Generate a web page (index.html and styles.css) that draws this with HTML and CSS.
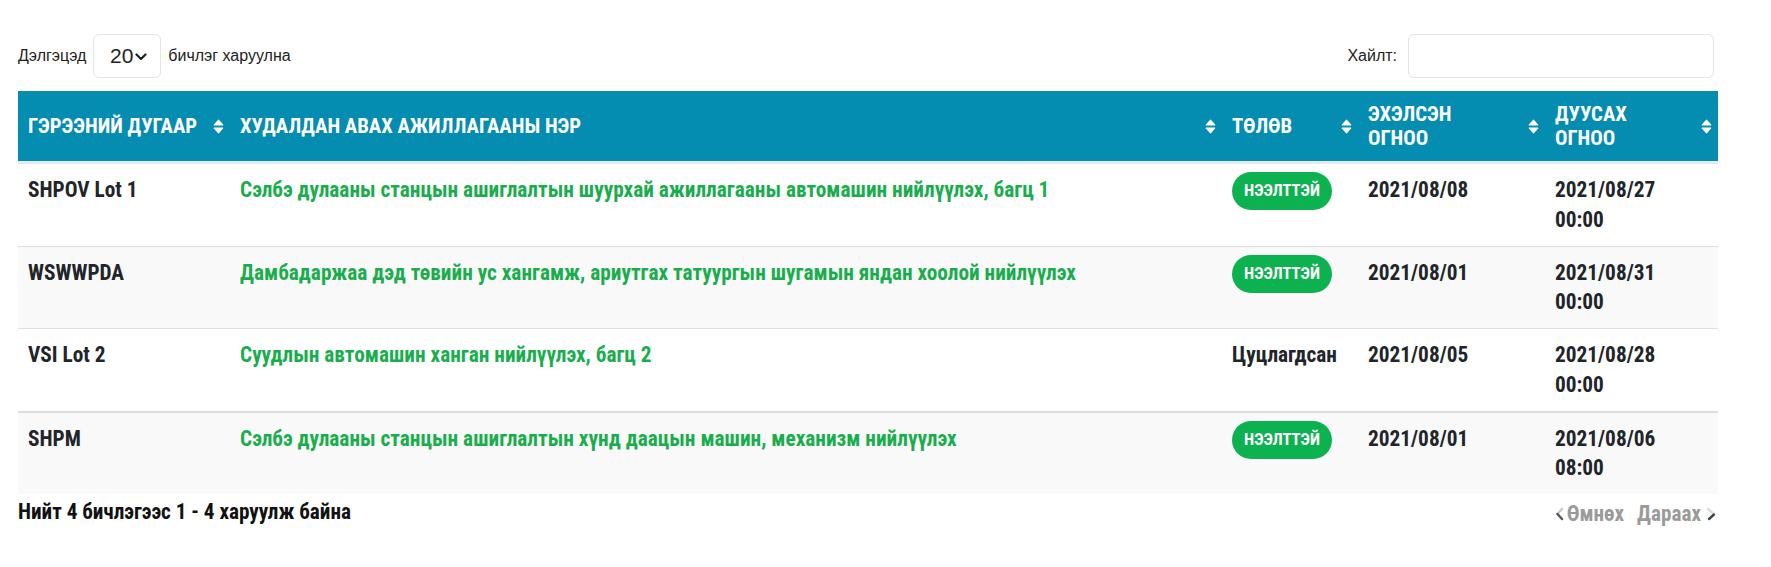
FILE: index.html
```html
<!DOCTYPE html>
<html lang="mn">
<head>
<meta charset="utf-8">
<title>Гэрээ</title>
<link rel="stylesheet" href="styles.css">
</head>
<body>
<div class="wrap">
  <div class="controls">
    <div class="length">
      <span>Дэлгэцэд</span>
      <div class="select">
        <span class="select-val">20</span>
        <svg class="chev" width="12" height="8" viewBox="0 0 12 8"><path d="M1.5 1.5 L6 6 L10.5 1.5" fill="none" stroke="#222" stroke-width="2.2" stroke-linecap="round" stroke-linejoin="round"/></svg>
      </div>
      <span>бичлэг харуулна</span>
    </div>
    <div class="search">
      <label>Хайлт:</label>
      <div class="input"></div>
    </div>
  </div>

  <table class="grid">
    <colgroup>
      <col class="c1"><col class="c2"><col class="c3"><col class="c4"><col class="c5">
    </colgroup>
    <thead>
      <tr>
        <th><div class="th"><span>Гэрээний дугаар</span><svg class="sort" viewBox="0 0 10 16"><path d="M1 6.5 L5 2 L9 6.5 Z M1 9.5 L5 14 L9 9.5 Z" fill="#fff" stroke="#fff" stroke-width="1" stroke-linejoin="round"/></svg></div></th>
        <th><div class="th"><span>Худалдан авах ажиллагааны нэр</span><svg class="sort" viewBox="0 0 10 16"><path d="M1 6.5 L5 2 L9 6.5 Z M1 9.5 L5 14 L9 9.5 Z" fill="#fff" stroke="#fff" stroke-width="1" stroke-linejoin="round"/></svg></div></th>
        <th><div class="th"><span>Төлөв</span><svg class="sort" viewBox="0 0 10 16"><path d="M1 6.5 L5 2 L9 6.5 Z M1 9.5 L5 14 L9 9.5 Z" fill="#fff" stroke="#fff" stroke-width="1" stroke-linejoin="round"/></svg></div></th>
        <th><div class="th"><span class="narrow">Эхэлсэн огноо</span><svg class="sort" viewBox="0 0 10 16"><path d="M1 6.5 L5 2 L9 6.5 Z M1 9.5 L5 14 L9 9.5 Z" fill="#fff" stroke="#fff" stroke-width="1" stroke-linejoin="round"/></svg></div></th>
        <th><div class="th"><span class="narrow">Дуусах огноо</span><svg class="sort" viewBox="0 0 10 16"><path d="M1 6.5 L5 2 L9 6.5 Z M1 9.5 L5 14 L9 9.5 Z" fill="#fff" stroke="#fff" stroke-width="1" stroke-linejoin="round"/></svg></div></th>
      </tr>
    </thead>
    <tbody>
      <tr>
        <td>SHPOV Lot 1</td>
        <td><a class="link" href="#">Сэлбэ дулааны станцын ашиглалтын шуурхай ажиллагааны автомашин нийлүүлэх, багц 1</a></td>
        <td><span class="badge">НЭЭЛТТЭЙ</span></td>
        <td>2021/08/08</td>
        <td>2021/08/27<br>00:00</td>
      </tr>
      <tr>
        <td>WSWWPDA</td>
        <td><a class="link" href="#">Дамбадаржаа дэд төвийн ус хангамж, ариутгах татуургын шугамын яндан хоолой нийлүүлэх</a></td>
        <td><span class="badge">НЭЭЛТТЭЙ</span></td>
        <td>2021/08/01</td>
        <td>2021/08/31<br>00:00</td>
      </tr>
      <tr>
        <td>VSI Lot 2</td>
        <td><a class="link" href="#">Суудлын автомашин ханган нийлүүлэх, багц 2</a></td>
        <td>Цуцлагдсан</td>
        <td>2021/08/05</td>
        <td>2021/08/28<br>00:00</td>
      </tr>
      <tr class="last">
        <td>SHPM</td>
        <td><a class="link" href="#">Сэлбэ дулааны станцын ашиглалтын хүнд даацын машин, механизм нийлүүлэх</a></td>
        <td><span class="badge">НЭЭЛТТЭЙ</span></td>
        <td>2021/08/01</td>
        <td>2021/08/06<br>08:00</td>
      </tr>
    </tbody>
  </table>

  <div class="footer">
    <div class="info">Нийт 4 бичлэгээс 1 - 4 харуулж байна</div>
    <div class="pager">
      <span class="pbtn"><svg class="arr" width="9" height="14" viewBox="0 0 9 14"><path d="M7 2 L2.5 7" stroke="#c8c8c8" stroke-width="2.4" stroke-linecap="round" fill="none"/><path d="M2.5 7 L7 12" stroke="#555" stroke-width="2.4" stroke-linecap="round" fill="none"/></svg>Өмнөх</span>
      <span class="pbtn">Дараах<svg class="arr" width="14" height="14" viewBox="0 0 14 14"><path d="M4 2 L9 6.5" stroke="#dcdcdc" stroke-width="2.4" stroke-linecap="round" fill="none"/><path d="M10 7.5 L5 12" stroke="#444" stroke-width="2.4" stroke-linecap="round" fill="none"/></svg></span>
    </div>
  </div>
</div>
</body>
</html>
```

FILE: styles.css
```css
* { box-sizing: border-box; }

html, body {
  margin: 0;
  padding: 0;
  background: #fff;
}

.wrap {
  width: 1718px;
  padding: 34px 0 0 18px;
  font-family: "Roboto Condensed", "Roboto", "Liberation Sans", sans-serif;
  font-stretch: condensed;
  color: #212529;
}

.controls {
  display: flex;
  justify-content: space-between;
  align-items: center;
  height: 44px;
  font-family: "Liberation Sans", Arial, sans-serif;
  font-stretch: normal;
  font-size: 16px;
  color: #222;
}

.length {
  display: flex;
  align-items: center;
  gap: 7px;
}

.select {
  width: 68px;
  height: 44px;
  border: 1px solid #e4e4e4;
  border-radius: 6px;
  display: flex;
  align-items: center;
  justify-content: center;
  gap: 2px;
  padding-left: 3px;
}

.select-val {
  font-size: 21px;
  color: #222;
}

.chev { display: block; margin-top: 2px; }

.search {
  display: flex;
  align-items: center;
  gap: 11px;
  padding-right: 4px;
}

.input {
  width: 306px;
  height: 44px;
  border: 1px solid #e4e4e4;
  border-radius: 6px;
  background: #fff;
}

.grid {
  margin-top: 13px;
  width: 1700px;
  border-collapse: collapse;
  table-layout: fixed;
  font-size: 21.3px;
  font-weight: 700;
}

.c1 { width: 212px; }
.c2 { width: 992px; }
.c3 { width: 136px; }
.c4 { width: 187px; }
.c5 { width: 173px; }

thead th {
  background: #048db1;
  color: #fff;
  text-align: left;
  text-transform: uppercase;
  font-size: 20.7px;
  line-height: 24px;
  padding: 11px 6px 11px 10px;
  height: 71px;
  vertical-align: middle;
  border-bottom: 3px solid #e2ebef;
}

.th {
  display: flex;
  align-items: center;
  justify-content: space-between;
  gap: 8px;
}

.th .narrow { max-width: 130px; }

.sort {
  flex: none;
  width: 11px;
  height: 17px;
}

tbody td {
  padding: 11px 10px 11.5px 10px;
  line-height: 29.5px;
  vertical-align: top;
  border-top: 1px solid #dfdfdf;
  color: #212529;
}

tbody tr:first-child td { border-top: 0; }

tbody tr:nth-child(even) td { background: #f9f9f9; }

tbody tr.last td { border-top: 2px solid #dcdcdc; }

.link {
  color: #1aad4e;
  text-decoration: none;
}

.badge {
  display: block;
  width: fit-content;
  margin-top: -3px;
  height: 38px;
  line-height: 38px;
  padding: 0 12px;
  border-radius: 19px;
  background: #0bb24f;
  color: #fff;
  font-size: 16.5px;
}

.footer {
  display: flex;
  justify-content: space-between;
  align-items: center;
  height: 35px;
  font-weight: 700;
  font-size: 21.2px;
}

.info { color: #111; }

.pager {
  display: flex;
  align-items: center;
  gap: 13px;
  color: #9a9a9a;
  padding-top: 4px;
}

.pbtn {
  display: flex;
  align-items: center;
  gap: 3px;
}

.arr { display: block; }
```
